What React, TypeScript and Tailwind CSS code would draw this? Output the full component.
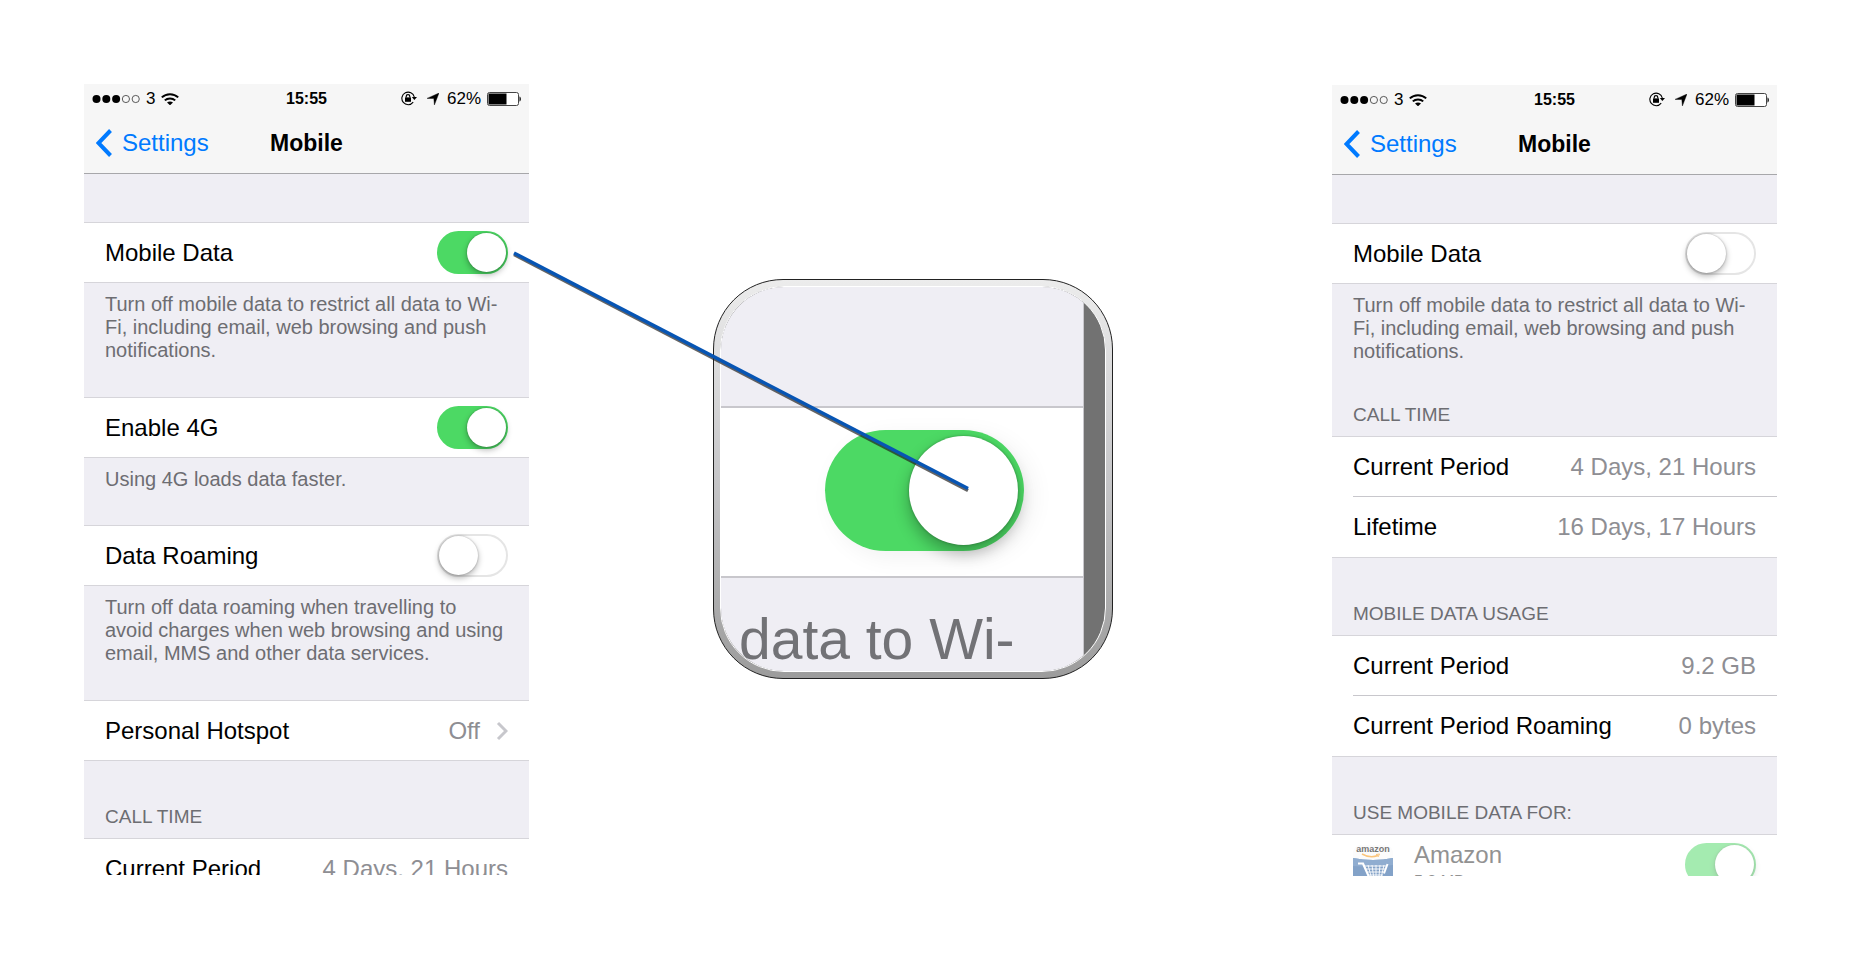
import { useState, type ReactNode } from "react";

function SignalIcon() {
  return (
    <svg className="h-3 w-12" viewBox="0 0 48 12" aria-hidden="true">
      <circle cx="4.5" cy="6" r="4" fill="#000" />
      <circle cx="14.3" cy="6" r="4" fill="#000" />
      <circle cx="24.1" cy="6" r="4" fill="#000" />
      <circle cx="33.9" cy="6" r="3.6" fill="none" stroke="#333" strokeWidth="0.8" />
      <circle cx="43.7" cy="6" r="3.6" fill="none" stroke="#333" strokeWidth="0.8" />
    </svg>
  );
}

function WifiIcon() {
  return (
    <svg className="h-3 w-[18px]" viewBox="0 0 18 12" fill="none" stroke="#000" strokeWidth="2" aria-hidden="true">
      <path d="M0.8 4.4C5.3 0.1 12.7 0.1 17.2 4.4" />
      <path d="M3.8 7.4C6.6 4.7 11.4 4.7 14.2 7.4" />
      <path d="M6 9.5C7.7 8 10.3 8 12 9.5L9 12.3Z" fill="#000" stroke="none" />
    </svg>
  );
}

function RotationLockIcon() {
  return (
    <svg className="h-[15px] w-4" viewBox="0 0 16 15" fill="none" aria-hidden="true">
      <path d="M12.2 11.2A6.3 6.3 0 1 1 13.3 6" stroke="#000" strokeWidth="1.1" />
      <path d="M10.8 6H16L13.4 9Z" fill="#000" />
      <rect x="4" y="6.4" width="6" height="4.4" fill="#000" />
      <path d="M5.2 6.6V5.4a1.8 1.8 0 0 1 3.6 0V6.6" stroke="#000" strokeWidth="1.2" />
    </svg>
  );
}

function LocationIcon() {
  return (
    <svg className="h-3 w-3" viewBox="0 0 12 12" aria-hidden="true">
      <path d="M12 0L7.4 12L6.8 5.5L0 5.4Z" fill="#000" stroke="#000" strokeWidth="0.4" />
    </svg>
  );
}

function BatteryIcon() {
  return (
    <svg className="h-[14px] w-[34px]" viewBox="0 0 34 14" aria-hidden="true">
      <rect x="0.5" y="0.5" width="31" height="13" rx="2" fill="#fff" stroke="#444" />
      <rect x="1.5" y="1.5" width="18" height="11" fill="#000" />
      <path d="M32.5 4.5C34.3 5 34.3 9 32.5 9.5Z" fill="#000" />
    </svg>
  );
}

function AmazonIcon() {
  return (
    <svg className="h-10 w-10 shrink-0" viewBox="0 0 40 40" aria-hidden="true">
      <defs>
        <clipPath id="tile">
          <rect width="40" height="40" rx="8" />
        </clipPath>
      </defs>
      <g clipPath="url(#tile)">
        <rect width="40" height="40" fill="#fcfcfc" />
        <path d="M0 13Q20 17 40 13V40H0Z" fill="#83a2c8" />
        <path d="M0 13Q20 17 40 13V20Q20 23 0 21Z" fill="#90add0" />
        <text x="20" y="7" textAnchor="middle" fontSize="9" fontWeight="700" fill="#777" fontFamily="Liberation Sans, Arial, sans-serif">
          amazon
        </text>
        <path d="M9 9Q17 13.5 25 10.5" fill="none" stroke="#fbc57c" strokeWidth="1.5" />
        <path d="M23 9.5L26.5 9L25 12" fill="none" stroke="#fbc57c" strokeWidth="1" />
        <path d="M5 18.5H10L16 32H31" fill="none" stroke="#fff" strokeWidth="2.2" />
        <path d="M31 28.5L34.5 19" fill="none" stroke="#fff" strokeWidth="2" />
        <path d="M12 21H33M13 24H32M14.5 27H31M16 30H30M15 20L18 31M19 20L20.5 31M23 20V31M27 20L26 31M31 20L28.5 31" stroke="#fff" strokeWidth="0.9" />
      </g>
    </svg>
  );
}

type SwitchProps = {
  id: string;
  defaultOn?: boolean;
  disabled?: boolean;
};

function Switch({ id, defaultOn = false, disabled = false }: SwitchProps) {
  const [on, setOn] = useState(defaultOn);

  return (
    <input
      id={id}
      type="checkbox"
      role="switch"
      checked={on}
      disabled={disabled}
      onChange={() => setOn(!on)}
      className="flex h-[43px] w-[71px] shrink-0 cursor-pointer appearance-none items-center rounded-full border-2 border-[#e5e5e5] bg-white before:h-[39px] before:w-[39px] before:rounded-full before:bg-white before:shadow-[0_3px_6px_rgba(0,0,0,0.3),0_0_2px_rgba(0,0,0,0.3)] checked:justify-end checked:border-[#4cd964] checked:bg-[#4cd964] disabled:opacity-50"
    />
  );
}

function Group({ children }: { children: ReactNode }) {
  return <div className="divide-y divide-[#c8c7cc] border-y border-[#d6d5da] bg-white">{children}</div>;
}

function SwitchRow({ label, ...rest }: SwitchProps & { label: string }) {
  return (
    <div className="flex h-[59px] items-center justify-between px-[21px]">
      <label htmlFor={rest.id} className="text-2xl">
        {label}
      </label>
      <Switch {...rest} />
    </div>
  );
}

function ValueRow({ label, value }: { label: string; value: string }) {
  return (
    <div className="ml-[21px] flex h-[60px] items-center justify-between pr-[21px] text-2xl whitespace-nowrap">
      <span>{label}</span>
      <span className="text-[#8e8e93]">{value}</span>
    </div>
  );
}

function Footnote({ className, children }: { className: string; children: ReactNode }) {
  return <p className={`pt-2.5 pl-[21px] text-[20px] leading-[23px] text-[#6d6d72] ${className}`}>{children}</p>;
}

function SectionTitle({ children }: { children: ReactNode }) {
  return (
    <h2 className="flex h-[77px] items-end px-[21px] pb-2.5 text-[19px] leading-[23px] text-[#6d6d72] uppercase">
      {children}
    </h2>
  );
}

function Phone({ children }: { children: ReactNode }) {
  return (
    <section className="h-[791px] overflow-hidden bg-[#efeef4]">
      <header className="h-[90px] border-b border-[#a7a7aa] bg-[#f6f6f6]">
        <div className="grid h-[29px] grid-cols-[1fr_auto_1fr] items-center px-2 text-[17px] leading-7">
          <div className="flex items-center">
            <SignalIcon />
            <span className="mx-1.5">3</span>
            <WifiIcon />
          </div>
          <time className="text-base leading-7 font-bold">15:55</time>
          <div className="flex items-center justify-end">
            <RotationLockIcon />
            <span className="mr-2 ml-2.5">
              <LocationIcon />
            </span>
            <span className="mr-1.5">62%</span>
            <BatteryIcon />
          </div>
        </div>
        <nav className="grid h-[60px] grid-cols-[1fr_auto_1fr] items-center px-3">
          <a href="#settings" className="flex items-center gap-2.5 text-2xl text-[#007aff]">
            <svg className="h-7 w-4" viewBox="0 0 16 28" fill="none" stroke="currentColor" strokeWidth="4" aria-hidden="true">
              <path d="M14.5 1.5L2.5 14L14.5 26.5" />
            </svg>
            Settings
          </a>
          <h1 className="text-[23px] font-bold">Mobile</h1>
        </nav>
      </header>
      <div className="pt-12">{children}</div>
    </section>
  );
}

function Magnifier() {
  return (
    <figure className="relative h-[400px] w-[400px] shrink-0">
      <div className="h-full rounded-[70px] border border-[#222] bg-linear-to-b from-[#ececec] via-[#c6c6c8] to-[#9c9c9c] p-1.5">
        <div className="flex h-full overflow-hidden rounded-[64px] border border-white bg-[#727272]">
          <div className="flex-1 border-r border-[#c8c7cc] bg-[#efeef4]">
            <div className="mt-[119px] flex h-[172px] items-center justify-end border-y-2 border-[#c8c7cc] bg-white pr-[59px] pb-1">
              <div className="flex h-[121px] w-[199px] items-center justify-end rounded-full bg-[#4cd964] pr-1.5 shadow-[8px_6px_24px_rgba(0,0,0,0.06)]">
                <div className="h-[109px] w-[109px] rounded-full bg-white shadow-[0_8px_16px_rgba(0,0,0,0.3),0_0_3px_rgba(0,0,0,0.3)]" />
              </div>
            </div>
            <p className="pt-[26px] pl-[18px] text-[57px] leading-[70px] whitespace-nowrap text-[#727276]">data to Wi-</p>
          </div>
          <div className="w-[21px]" />
        </div>
      </div>
      {/* pointer from the switch to its magnified view */}
      <svg className="pointer-events-none absolute inset-0 h-full w-full overflow-visible" viewBox="0 0 400 400" aria-hidden="true">
        <path d="M-199 -24.5L255 211.5" stroke="#222" strokeOpacity="0.7" strokeWidth="3.5" />
        <path d="M-199 -26L255 209.5" stroke="#0755b4" strokeWidth="3.5" />
      </svg>
    </figure>
  );
}

export default function App() {
  return (
    <main className="grid grid-cols-[445fr_803fr_445fr] items-start bg-white pt-[84px] pr-[85px] pl-[84px] font-['Liberation_Sans',Arial,sans-serif] text-black">
      <Phone>
        <Group>
          <SwitchRow id="mobile-data" label="Mobile Data" defaultOn />
        </Group>
        <Footnote className="h-[114px]">
          Turn off mobile data to restrict all data to Wi-
          <br />
          Fi, including email, web browsing and push notifications.
        </Footnote>
        <Group>
          <SwitchRow id="enable-4g" label="Enable 4G" defaultOn />
        </Group>
        <Footnote className="h-[67px]">Using 4G loads data faster.</Footnote>
        <Group>
          <SwitchRow id="data-roaming" label="Data Roaming" />
        </Group>
        <Footnote className="h-[114px]">
          Turn off data roaming when travelling to
          <br />
          avoid charges when web browsing and using email, MMS and other data services.
        </Footnote>
        <Group>
          <a href="#hotspot" className="flex h-[59px] items-center px-[21px] text-2xl">
            Personal Hotspot
            <span className="ml-auto text-[#8e8e93]">Off</span>
            <svg className="ml-4 h-5 w-3" viewBox="0 0 12 20" fill="none" stroke="#c7c7cc" strokeWidth="3" aria-hidden="true">
              <path d="M2 2L10 10L2 18" />
            </svg>
          </a>
        </Group>
        <SectionTitle>Call time</SectionTitle>
        <Group>
          <ValueRow label="Current Period" value="4 Days, 21 Hours" />
        </Group>
      </Phone>

      <div className="flex pt-[195px] pl-[184px]">
        <Magnifier />
      </div>

      <div className="pt-px">
        <Phone>
          <Group>
            <SwitchRow id="mobile-data-off" label="Mobile Data" />
          </Group>
          <Footnote className="h-[75px]">
            Turn off mobile data to restrict all data to Wi-
            <br />
            Fi, including email, web browsing and push notifications.
          </Footnote>
          <SectionTitle>Call time</SectionTitle>
          <Group>
            <ValueRow label="Current Period" value="4 Days, 21 Hours" />
            <ValueRow label="Lifetime" value="16 Days, 17 Hours" />
          </Group>
          <SectionTitle>Mobile data usage</SectionTitle>
          <Group>
            <ValueRow label="Current Period" value="9.2 GB" />
            <ValueRow label="Current Period Roaming" value="0 bytes" />
          </Group>
          <SectionTitle>Use mobile data for:</SectionTitle>
          <Group>
            <div className="flex h-[59px] items-center px-[21px]">
              <AmazonIcon />
              <label htmlFor="amazon-data" className="ml-[21px] flex-1 self-start pt-1 text-[#929292]">
                <span className="block text-2xl leading-8">Amazon</span>
                <span className="block text-base leading-[22px]">5.2 MB</span>
              </label>
              <Switch id="amazon-data" defaultOn disabled />
            </div>
          </Group>
        </Phone>
      </div>
    </main>
  );
}
